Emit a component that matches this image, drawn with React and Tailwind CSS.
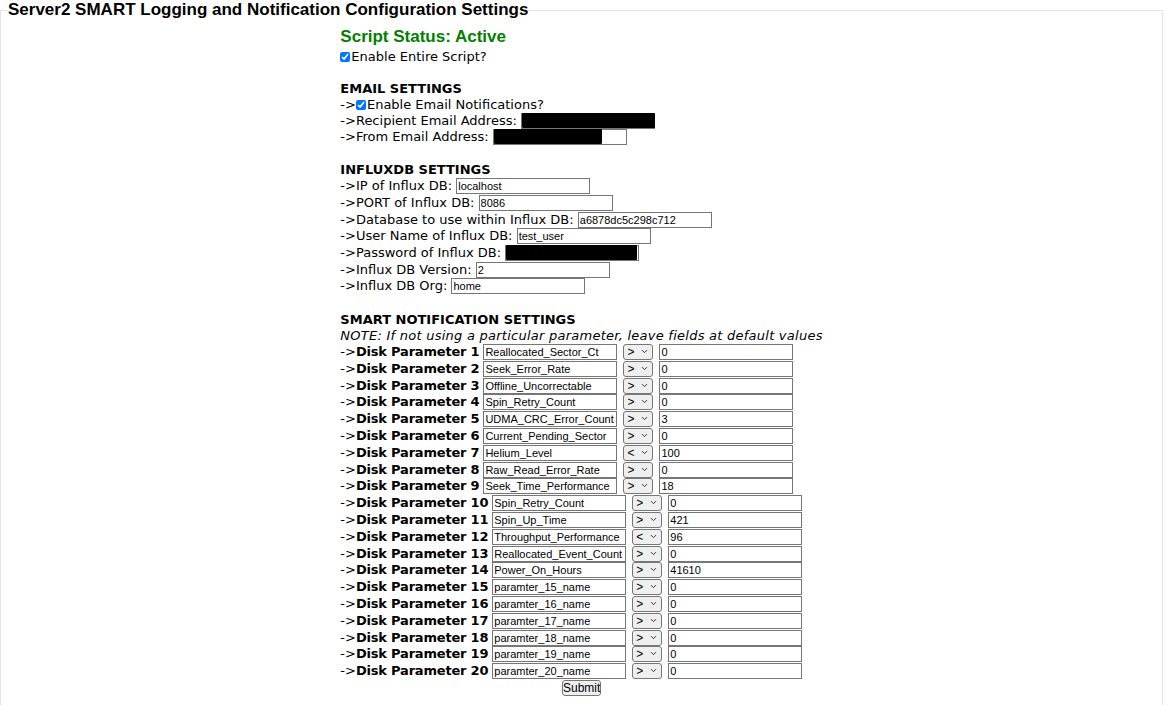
import { ChevronDown } from 'lucide-react';

const disks = [
  ['Reallocated_Sector_Ct', '>', '0'],
  ['Seek_Error_Rate', '>', '0'],
  ['Offline_Uncorrectable', '>', '0'],
  ['Spin_Retry_Count', '>', '0'],
  ['UDMA_CRC_Error_Count', '>', '3'],
  ['Current_Pending_Sector', '>', '0'],
  ['Helium_Level', '<', '100'],
  ['Raw_Read_Error_Rate', '>', '0'],
  ['Seek_Time_Performance', '>', '18'],
  ['Spin_Retry_Count', '>', '0'],
  ['Spin_Up_Time', '>', '421'],
  ['Throughput_Performance', '<', '96'],
  ['Reallocated_Event_Count', '>', '0'],
  ['Power_On_Hours', '>', '41610'],
  ['paramter_15_name', '>', '0'],
  ['paramter_16_name', '>', '0'],
  ['paramter_17_name', '>', '0'],
  ['paramter_18_name', '>', '0'],
  ['paramter_19_name', '>', '0'],
  ['paramter_20_name', '>', '0'],
];

const influx = [
  ['IP of Influx DB:', 'localhost'],
  ['PORT of Influx DB:', '8086'],
  ['Database to use within Influx DB:', 'a6878dc5c298c712'],
  ['User Name of Influx DB:', 'test_user'],
  ['Password of Influx DB:', null],
  ['Influx DB Version:', '2'],
  ['Influx DB Org:', 'home'],
];

const inputCls =
  'h-[16px] w-[134px] border border-[#767676] bg-white px-[1px] text-[11px] leading-[14px] text-black outline-none';

const TextBox = ({ value, redact, className = '' }) => (
  <span className={`relative inline-flex ${className}`}>
    <input type="text" defaultValue={value} className={inputCls} style={{ fontFamily: '"Liberation Sans", Arial, sans-serif' }} />
    {redact && (
      <span className="absolute left-[1px] top-[0px] h-[15px] bg-black rounded-[1px]" style={{ width: redact }} />
    )}
  </span>
);

const Check = () => (
  <input type="checkbox" defaultChecked className="m-0 mr-[1px] h-[10px] w-[10px] accent-[#0075ff]" />
);

const Compare = ({ value }) => (
  <span className="relative ml-[6px] inline-flex">
    <select
      defaultValue={value}
      className="h-[16px] w-[30px] appearance-none rounded-[3px] border border-[#767676] bg-[#efefef] pl-[3px] text-[12px] leading-[14px] text-black outline-none"
      style={{ fontFamily: '"Liberation Sans", Arial, sans-serif' }}
    >
      <option value=">">&gt;</option>
      <option value="<">&lt;</option>
      <option value="=">=</option>
    </select>
    <ChevronDown size={9} strokeWidth={2.4} className="pointer-events-none absolute right-[4px] top-[3px] text-[#222]" />
  </span>
);

export default function App() {
  return (
    <div className="bg-white text-black text-[13px]" style={{ fontFamily: '"DejaVu Sans", Verdana, sans-serif' }}>
      <fieldset className="mr-[4px] border border-[#e4e4e4] pb-[12px]">
        <legend
          className="ml-[7px] text-[17px] font-bold leading-[20px]"
          style={{ fontFamily: '"Liberation Sans", Arial, sans-serif' }}
        >
          Server2 SMART Logging and Notification Configuration Settings
        </legend>

        <div className="mx-auto mt-[7px] w-fit">
          <div
            className="h-[20px] text-[17px] font-bold leading-[20px] text-[#008000]"
            style={{ fontFamily: '"Liberation Sans", Arial, sans-serif' }}
          >
            Script Status: Active
          </div>
          <div className="mt-[2px] flex h-[16px] items-center leading-[16px]">
            <Check />
            Enable Entire Script?
          </div>

          {/* email */}
          <div className="mt-[16px] h-[16px] font-bold leading-[16px]">EMAIL SETTINGS</div>
          <div className="flex h-[16px] items-center leading-[16px]">
            <span className="whitespace-pre">-&gt;</span>
            <Check />
            Enable Email Notifications?
          </div>
          <div className="flex h-[16px] items-center leading-[16px]">
            <span className="whitespace-pre">-&gt;Recipient Email Address: </span>
            <TextBox value="" redact="133px" />
          </div>
          <div className="flex h-[16px] items-center leading-[16px]">
            <span className="whitespace-pre">-&gt;From Email Address: </span>
            <TextBox value="" redact="108px" />
          </div>

          {/* influx */}
          <div className="mt-[17px] h-[16px] font-bold leading-[16px]">INFLUXDB SETTINGS</div>
          {influx.map(([label, val]) => (
            <div key={label} className="flex h-[16.67px] items-center leading-[16px]">
              <span className="whitespace-pre">-&gt;{label} </span>
              <TextBox value={val ?? ''} redact={val === null ? '131px' : null} />
            </div>
          ))}

          {/* smart */}
          <div className="mt-[17px] h-[16px] font-bold leading-[16px]">SMART NOTIFICATION SETTINGS</div>
          <div className="h-[16px] italic leading-[16px] tracking-[0.25px]">
            NOTE: If not using a particular parameter, leave fields at default values
          </div>
          {disks.map(([name, op, val], i) => (
            <div key={i} className="flex h-[16.8px] items-center leading-[16px]">
              <span className="whitespace-pre">-&gt;</span>
              <b className="whitespace-pre tracking-[-0.2px]">Disk Parameter {i + 1}</b>
              <TextBox value={name} className="ml-[4px]" />
              <Compare value={op} />
              <TextBox value={val} className="ml-[6px]" />
            </div>
          ))}

          <div className="flex justify-center">
            <button
              type="submit"
              className="h-[16px] w-[39px] rounded-[3px] border border-[#767676] bg-[#efefef] text-[12px] leading-[14px] text-black"
              style={{ fontFamily: '"Liberation Sans", Arial, sans-serif' }}
            >
              Submit
            </button>
          </div>
        </div>
      </fieldset>
    </div>
  );
}
